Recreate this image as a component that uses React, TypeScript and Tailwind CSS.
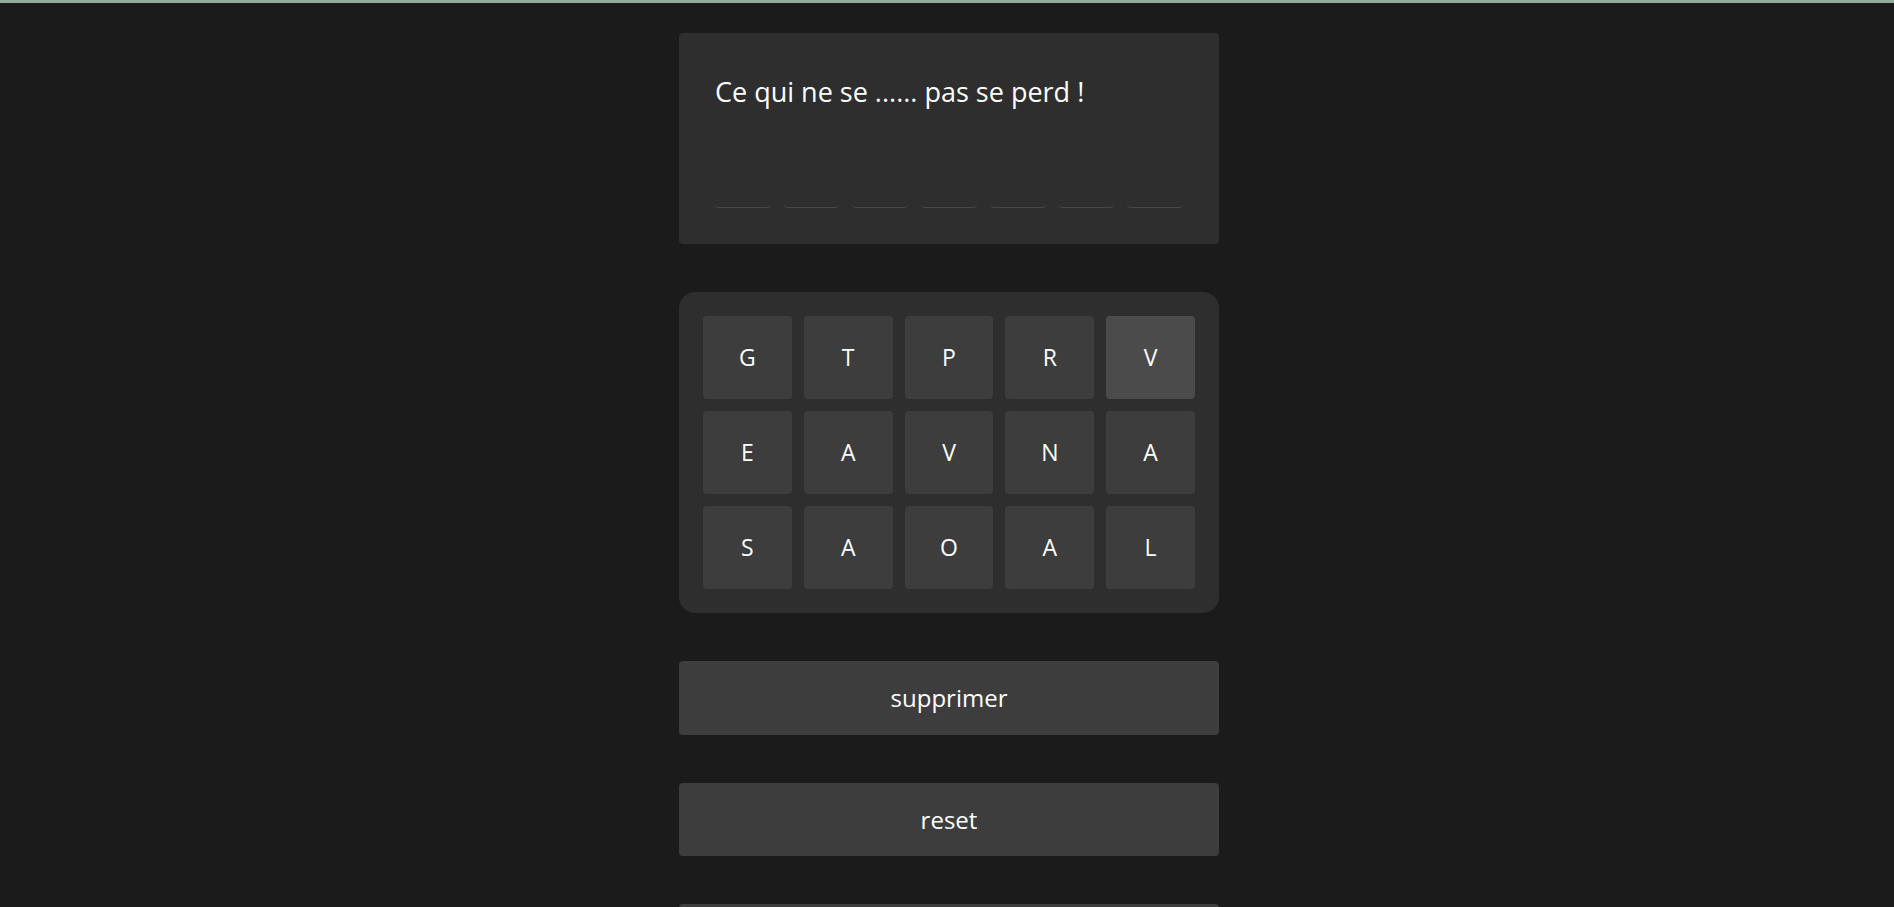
import React from "react";

const letters = ["G", "T", "P", "R", "V", "E", "A", "V", "N", "A", "S", "A", "O", "A", "L"];

export default function App() {
  return (
    <div className="min-h-[907px] border-t-[3px] border-[#8fab9b] bg-[#1b1b1b] pl-[4px] font-['Open_Sans',sans-serif] text-white">
      <div className="mx-auto flex w-[540px] flex-col gap-[48px] pt-[30px]">
        <section className="flex h-[211px] flex-col rounded-[4px] bg-[#2e2e2e] px-[36px] pb-[36px] pt-[39px]">
          <p className="text-[27px] leading-[40px]">Ce qui ne se ...... pas se perd !</p>
          <div className="mt-auto flex gap-[13px]">
            {Array.from({ length: 7 }).map((_, i) => (
              <div key={i} className="h-[40px] flex-1 rounded-[4px] border-b border-[#474747]" />
            ))}
          </div>
        </section>

        <section className="grid grid-cols-5 gap-[12px] rounded-[16px] bg-[#2e2e2e] p-[24px]">
          {letters.map((l, i) => (
            <button
              key={i}
              className={`flex h-[83px] items-center justify-center rounded-[4px] text-[23px] ${
                i === 4 ? "bg-[#4b4b4b]" : "bg-[#3d3d3d]"
              }`}
            >
              {l}
            </button>
          ))}
        </section>

        <button className="h-[74px] rounded-[4px] bg-[#3d3d3d] text-[24px]">supprimer</button>
        <button className="h-[73px] rounded-[4px] bg-[#3d3d3d] text-[24px]">reset</button>
        <button className="h-[73px] rounded-[4px] bg-[#3d3d3d] text-[24px]" aria-label="valider" />
      </div>
    </div>
  );
}
